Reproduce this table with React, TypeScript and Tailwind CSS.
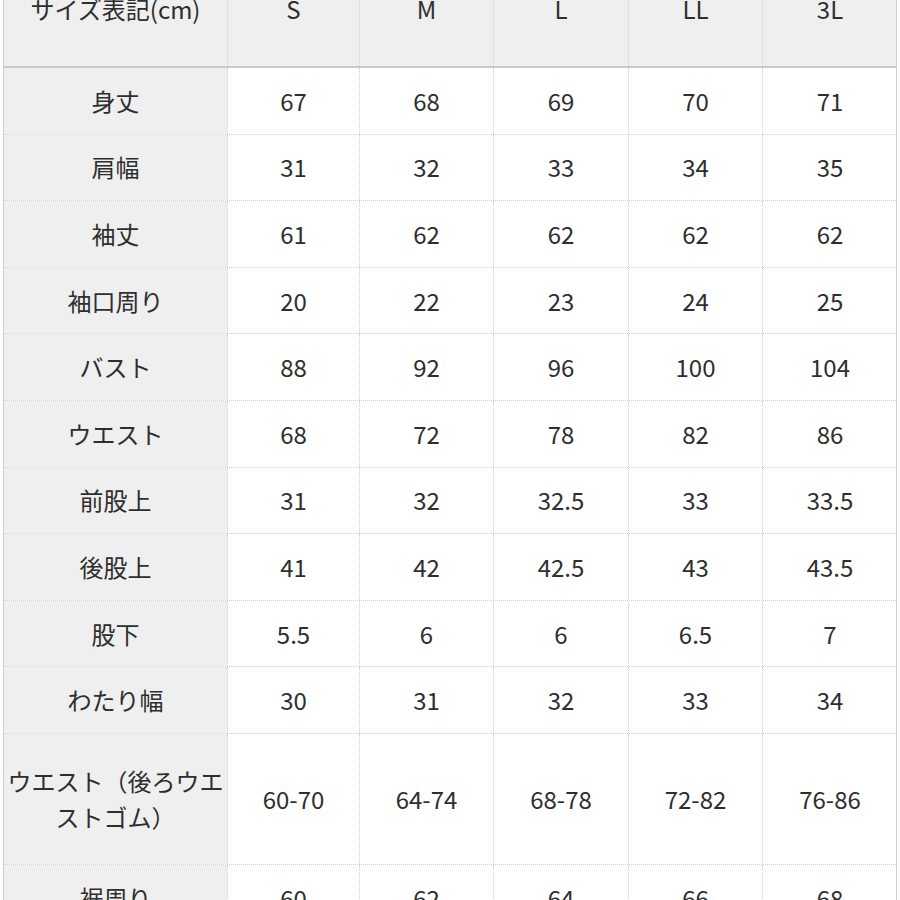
const sizes = ["S", "M", "L", "LL", "3L"];

const rows: { label: React.ReactNode; values: string[]; tall?: boolean }[] = [
  { label: "身丈", values: ["67", "68", "69", "70", "71"] },
  { label: "肩幅", values: ["31", "32", "33", "34", "35"] },
  { label: "袖丈", values: ["61", "62", "62", "62", "62"] },
  { label: "袖口周り", values: ["20", "22", "23", "24", "25"] },
  { label: "バスト", values: ["88", "92", "96", "100", "104"] },
  { label: "ウエスト", values: ["68", "72", "78", "82", "86"] },
  { label: "前股上", values: ["31", "32", "32.5", "33", "33.5"] },
  { label: "後股上", values: ["41", "42", "42.5", "43", "43.5"] },
  { label: "股下", values: ["5.5", "6", "6", "6.5", "7"] },
  { label: "わたり幅", values: ["30", "31", "32", "33", "34"] },
  {
    label: (
      <>
        ウエスト（後ろウエ
        <br />
        ストゴム）
      </>
    ),
    values: ["60-70", "64-74", "68-78", "72-82", "76-86"],
    tall: true,
  },
  { label: "裾周り", values: ["60", "62", "64", "66", "68"] },
];

const cols = "grid grid-cols-[223px_132px_134px_135px_134px_135px]";

export default function App() {
  return (
    <div
      className="w-[900px] h-[900px] overflow-hidden bg-white text-[#2e2e2e] text-[24px]"
      style={{ fontFamily: '"Noto Sans CJK JP", "Noto Sans", sans-serif' }}
    >
      <div className="ml-[3px] w-[894px] -mt-[48px] border-l border-r border-[#cfcfcf]">
        {/* header */}
        <div className={`${cols} h-[116px] bg-[#efefef] border-b-2 border-[#cbcbcb]`}>
          <div className="flex items-center justify-center whitespace-nowrap">サイズ表記(cm)</div>
          {sizes.map((s) => (
            <div key={s} className="flex items-center justify-center border-l border-dotted border-[#cfcfcf]">
              {s}
            </div>
          ))}
        </div>

        {rows.map((r, i) => (
          <div
            key={i}
            className={`${cols} ${r.tall ? "h-[131px]" : "h-[66.6px]"} border-b border-dotted border-[#cfcfcf]`}
          >
            <div className="flex items-center justify-center bg-[#efefef] text-center leading-[36px] whitespace-nowrap">
              {r.label}
            </div>
            {r.values.map((v, j) => (
              <div key={j} className="flex items-center justify-center border-l border-dotted border-[#cfcfcf]">
                {v}
              </div>
            ))}
          </div>
        ))}
      </div>
    </div>
  );
}
